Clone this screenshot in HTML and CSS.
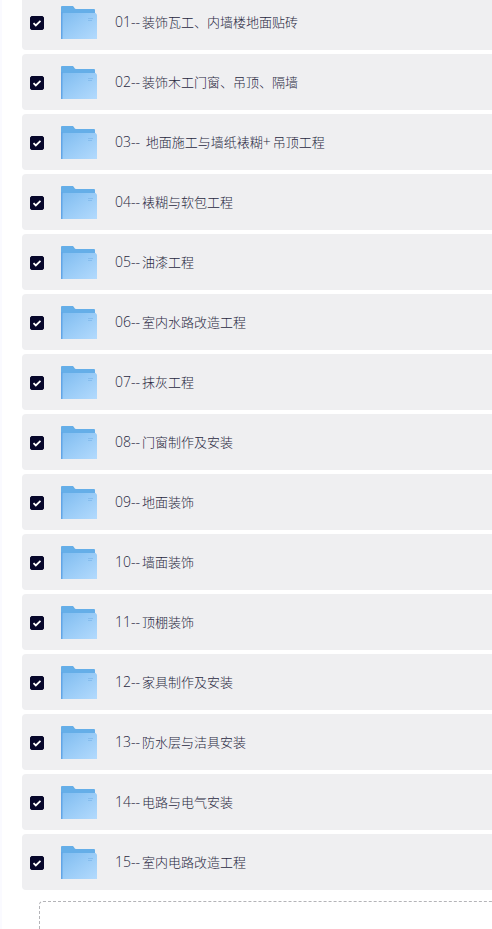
FILE: index.html
```html
<!DOCTYPE html>
<html lang="zh-CN">
<head>
    <meta charset="UTF-8">
    <meta name="viewport" content="width=device-width, initial-scale=1.0">
    <title>文件列表</title>
    <link rel="stylesheet" href="styles.css">
</head>
<body>
    <!-- folder icon, shared by all rows -->
    <svg class="sprite" aria-hidden="true">
        <defs>
            <linearGradient id="front" x1="0" y1="0" x2="1" y2="1">
                <stop offset="0" stop-color="#7fbcf0"/>
                <stop offset="0.5" stop-color="#9accf7"/>
                <stop offset="1" stop-color="#b3dafd"/>
            </linearGradient>
        </defs>
        <symbol id="folder" viewBox="0 0 36 33">
            <path fill="#65aee8" d="M0 1a1 1 0 0 1 1-1h10c1 0 1.600.4 2 1.200l.6 1c.3.600.7.800 1.400.800h18a1 1 0 0 1 1 1v9H2v20H0z"/>
            <path fill="url(#front)" d="M2 7h32.500L36 8.500V33H1V8a1 1 0 0 1 1-1z"/>
            <path fill="#62a5e6" d="M0 6h1.500v27H0z"/>
            <path fill="none" stroke="#85bdee" d="M27 12.500h5M27 14.500h4"/>
        </symbol>
    </svg>

    <main class="panel">
        <ul class="file-list">
            <li><label class="file"><input type="checkbox" checked><svg class="folder"><use href="#folder"/></svg><span class="name"><span class="num">01--</span>装饰瓦工、内墙楼地面贴砖</span></label></li>
            <li><label class="file"><input type="checkbox" checked><svg class="folder"><use href="#folder"/></svg><span class="name"><span class="num">02--</span>装饰木工门窗、吊顶、隔墙</span></label></li>
            <li><label class="file"><input type="checkbox" checked><svg class="folder"><use href="#folder"/></svg><span class="name"><span class="num">03-- </span>地面施工与墙纸裱糊<span class="num">+</span>吊顶工程</span></label></li>
            <li><label class="file"><input type="checkbox" checked><svg class="folder"><use href="#folder"/></svg><span class="name"><span class="num">04--</span>裱糊与软包工程</span></label></li>
            <li><label class="file"><input type="checkbox" checked><svg class="folder"><use href="#folder"/></svg><span class="name"><span class="num">05--</span>油漆工程</span></label></li>
            <li><label class="file"><input type="checkbox" checked><svg class="folder"><use href="#folder"/></svg><span class="name"><span class="num">06--</span>室内水路改造工程</span></label></li>
            <li><label class="file"><input type="checkbox" checked><svg class="folder"><use href="#folder"/></svg><span class="name"><span class="num">07--</span>抹灰工程</span></label></li>
            <li><label class="file"><input type="checkbox" checked><svg class="folder"><use href="#folder"/></svg><span class="name"><span class="num">08--</span>门窗制作及安装</span></label></li>
            <li><label class="file"><input type="checkbox" checked><svg class="folder"><use href="#folder"/></svg><span class="name"><span class="num">09--</span>地面装饰</span></label></li>
            <li><label class="file"><input type="checkbox" checked><svg class="folder"><use href="#folder"/></svg><span class="name"><span class="num">10--</span>墙面装饰</span></label></li>
            <li><label class="file"><input type="checkbox" checked><svg class="folder"><use href="#folder"/></svg><span class="name"><span class="num">11--</span>顶棚装饰</span></label></li>
            <li><label class="file"><input type="checkbox" checked><svg class="folder"><use href="#folder"/></svg><span class="name"><span class="num">12--</span>家具制作及安装</span></label></li>
            <li><label class="file"><input type="checkbox" checked><svg class="folder"><use href="#folder"/></svg><span class="name"><span class="num">13--</span>防水层与洁具安装</span></label></li>
            <li><label class="file"><input type="checkbox" checked><svg class="folder"><use href="#folder"/></svg><span class="name"><span class="num">14--</span>电路与电气安装</span></label></li>
            <li><label class="file"><input type="checkbox" checked><svg class="folder"><use href="#folder"/></svg><span class="name"><span class="num">15--</span>室内电路改造工程</span></label></li>
        </ul>
        <div class="drop-area"></div>
    </main>
</body>
</html>
```

FILE: styles.css
```css
* {
    box-sizing: border-box;
}
body {
    margin: 0;
    height: 100vh;
    overflow: hidden;
    background-color: #fff;
    color: #28283f;
    font-family: "Open Sans", "Noto Sans CJK SC", sans-serif;
    font-size: 13px;
    line-height: 20px;
}
.sprite {
    display: block;
    width: 0;
    height: 0;
}
.panel {
    display: flex;
    flex-direction: column;
    min-height: 100vh;
    padding-left: 20px;
    border-left: 2px solid #fafaff;
}
/* the list is scrolled a little past its first row's top */
.file-list {
    display: flex;
    flex-direction: column;
    gap: 4px;
    margin: -6px 0 0;
    padding: 0;
    list-style: none;
}
.file {
    display: flex;
    align-items: center;
    height: 56px;
    padding-left: 8px;
    border-radius: 4px 0 0 4px;
    background-color: #efeff1;
}
.file input {
    appearance: none;
    flex: none;
    width: 14px;
    height: 14px;
    margin: 2px 17px 0 0;
    border: 1px solid #07072b;
    border-radius: 2px;
    background-color: #fff;
}
.file input:checked {
    background: #07072b url("data:image/svg+xml,%3Csvg xmlns='http://www.w3.org/2000/svg' viewBox='0 0 12 12'%3E%3Cpath d='M2.500 6.200l2.300 2.300 4.700-4.700' fill='none' stroke='white' stroke-width='1.800'/%3E%3C/svg%3E") center / 12px 12px no-repeat;
}
.folder {
    flex: none;
    width: 36px;
    height: 33px;
    margin-right: 18px;
}
.name {
    font-weight: 300;
    white-space: nowrap;
}
.num {
    margin-right: 2px;
    font-size: 14px;
    white-space: pre;
}
.drop-area {
    flex: 1;
    min-height: 39px;
    margin: 11px 0 0 17px;
    border: 1px dashed #b4b4b8;
    border-width: 1px 0 0 1px;
    border-radius: 4px 0 0 0;
}
```
